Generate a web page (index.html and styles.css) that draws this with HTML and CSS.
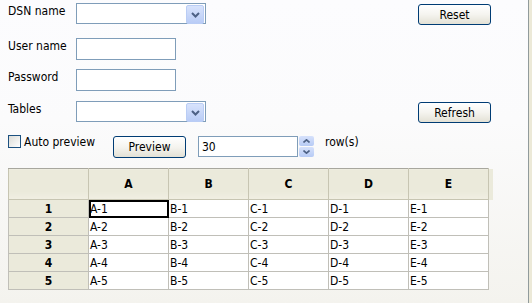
FILE: index.html
```html
<!DOCTYPE html>
<html lang="en">
<head>
<meta charset="UTF-8">
<title>ODBC preview</title>
<meta name="viewport" content="width=device-width, initial-scale=1.0">
<link rel="stylesheet" href="styles.css">
</head>
<body>

<div class="page">
    <div class="form">
        <div class="row r1">
            <label class="cap">DSN name</label>
            <div class="combo"><span class="drop"><svg width="9" height="6" viewBox="0 0 9 6"><path d="M1 1 L4.5 4.5 L8 1" fill="none" stroke="#4d6185" stroke-width="2"/></svg></span></div>
            <button class="btn push">Reset</button>
        </div>
        <div class="row r2">
            <label class="cap">User name</label>
            <input type="text" class="field">
        </div>
        <div class="row r3">
            <label class="cap">Password</label>
            <input type="password" class="field">
        </div>
        <div class="row r4">
            <label class="cap">Tables</label>
            <div class="combo"><span class="drop"><svg width="9" height="6" viewBox="0 0 9 6"><path d="M1 1 L4.5 4.5 L8 1" fill="none" stroke="#4d6185" stroke-width="2"/></svg></span></div>
            <button class="btn push">Refresh</button>
        </div>
        <div class="row r5">
            <label class="checkgroup"><span class="check"></span><span class="checklabel">Auto preview</span></label>
            <button class="btn preview">Preview</button>
            <div class="spinner">
                <span class="spinval">30</span>
                <span class="spin">
                    <span class="half"><svg width="7" height="4" viewBox="0 0 7 4"><path d="M0.5 3.5 L3.5 0.8 L6.5 3.5" fill="none" stroke="#4d6185" stroke-width="1.6"/></svg></span>
                    <span class="half"><svg width="7" height="4" viewBox="0 0 7 4"><path d="M0.5 0.5 L3.5 3.2 L6.5 0.5" fill="none" stroke="#4d6185" stroke-width="1.6"/></svg></span>
                </span>
            </div>
            <span class="rows">row(s)</span>
        </div>
    </div>

    <div class="gridwrap">
        <table class="grid">
            <colgroup><col><col><col><col><col><col></colgroup>
            <tr class="head"><th></th><th>A</th><th>B</th><th>C</th><th>D</th><th class="last">E</th></tr>
            <tr><th>1</th><td class="sel">A-1</td><td>B-1</td><td>C-1</td><td>D-1</td><td>E-1</td></tr>
            <tr><th>2</th><td>A-2</td><td>B-2</td><td>C-2</td><td>D-2</td><td>E-2</td></tr>
            <tr><th>3</th><td>A-3</td><td>B-3</td><td>C-3</td><td>D-3</td><td>E-3</td></tr>
            <tr><th>4</th><td>A-4</td><td>B-4</td><td>C-4</td><td>D-4</td><td>E-4</td></tr>
            <tr><th>5</th><td>A-5</td><td>B-5</td><td>C-5</td><td>D-5</td><td>E-5</td></tr>
        </table>
    </div>
</div>

</body>
</html>
```

FILE: styles.css
```css
html, body {
    margin: 0;
    height: 100%;
}

body {
    font-family: 'DejaVu Sans Condensed', 'DejaVu Sans', Verdana, sans-serif;
    font-stretch: condensed;
    font-size: 12px;
    color: #000;
    background: #ece9d8;
    display: flex;
}

.page {
    width: 529px;
    height: 303px;
    border-right: 1px solid #919b9c;
    background: linear-gradient(#fcfcfe 0, #fbfbfc 40%, #f4f3ee 100%);
    box-sizing: border-box;
}

.form {
    padding: 0 37px 0 8px;
}

.row {
    display: flex;
    align-items: flex-start;
}

.r1 { margin-top: 3px; }
.r2 { margin-top: 13px; }
.r3 { margin-top: 9px; }
.r4 { margin-top: 10px; }
.r5 { margin-top: 13px; }

.cap {
    width: 68px;
    line-height: 14px;
    padding-top: 1px;
}

.combo {
    width: 130px;
    height: 21px;
    box-sizing: border-box;
    border: 1px solid #7f9db9;
    background: white;
    display: flex;
    justify-content: flex-end;
    padding: 1px;
}

.drop {
    width: 16px;
    height: 17px;
    border: 1px solid #bacdf5;
    border-radius: 2px;
    background: linear-gradient(#d8e3fc, #b9ccf6);
    display: flex;
    align-items: center;
    justify-content: center;
}

.field {
    width: 100px;
    height: 22px;
    box-sizing: border-box;
    border: 1px solid #7f9db9;
    background: white;
    margin: 0;
    padding: 0 3px;
    font: inherit;
}

.btn {
    width: 73px;
    height: 21px;
    box-sizing: border-box;
    border: 1px solid #003c74;
    border-radius: 3px;
    background: linear-gradient(#ffffff 0, #f5f4ef 50%, #e3e1d5 100%);
    font: inherit;
    color: #000;
    padding: 0;
    margin: 0;
}

.push {
    margin-left: auto;
    margin-top: 1px;
}

.checkgroup {
    width: 105px;
    display: flex;
    align-items: flex-start;
}

.check {
    width: 13px;
    height: 13px;
    box-sizing: border-box;
    border: 1px solid #1c5180;
    background: linear-gradient(135deg, #dcdcd7, #ffffff);
    margin-top: -1px;
}

.checklabel {
    margin-left: 3px;
    line-height: 13px;
}

.preview {
    height: 22px;
}

.spinner {
    display: flex;
    margin-left: 12px;
}

.spinval {
    width: 100px;
    height: 21px;
    box-sizing: border-box;
    border: 1px solid #7f9db9;
    background: white;
    padding: 3px 0 0 3px;
}

.spin {
    width: 15px;
    height: 21px;
    margin-left: 1px;
    display: flex;
    flex-direction: column;
    gap: 1px;
}

.half {
    flex: 1;
    border-radius: 2px;
    background: linear-gradient(#d6e1fb, #b7cbf5);
    display: flex;
    align-items: center;
    justify-content: center;
}

.rows {
    margin-left: 11px;
    line-height: 13px;
}

.gridwrap {
    padding: 10px 0 0 8px;
}

.grid {
    border-collapse: collapse;
    table-layout: fixed;
    width: 481px;
    background: white;
}

.grid col {
    width: 80px;
}

.grid th,
.grid td {
    border: 1px solid #c0bfb8;
    padding: 0 1px;
    height: 17px;
    line-height: 16px;
    white-space: nowrap;
    overflow: hidden;
}

.grid th {
    background: #ebeadb;
    font-weight: bold;
    text-align: center;
}

.grid .head th {
    height: 29px;
    padding: 0 1px 1px;
    background: linear-gradient(#ebeadb 0, #ebeadb 75%, #f1efe3 100%);
    border-color: #c7c5b2;
    border-top-color: #a8a79e;
}

.grid .head th.last {
    box-shadow: 4px 0 0 #ebeadb;
    overflow: visible;
}

.grid td {
    text-align: left;
}

.grid td.sel {
    outline: 2px solid #000;
    outline-offset: -2px;
}
```
